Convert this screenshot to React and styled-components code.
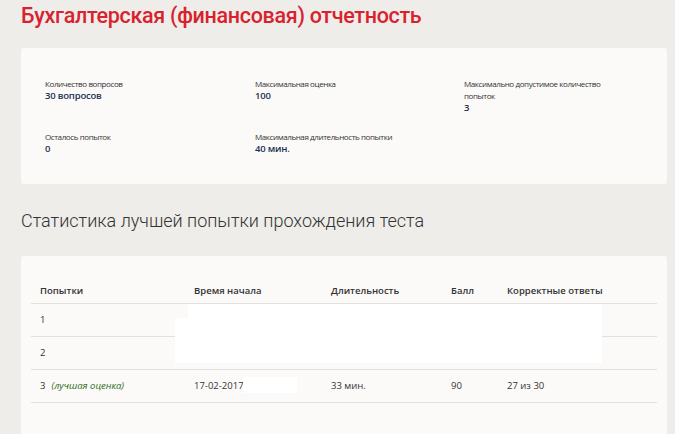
import React from "react";
import styled, { createGlobalStyle } from "styled-components";

const GlobalStyle = createGlobalStyle`
    body {
        margin: 0;
        background: #eeedea;
        font-family: "Open Sans", "Noto Sans", sans-serif;
        color: #333;
    }
`;

const Page = styled.div`
    padding: 0 8px 0 21px;
    height: 434px;
    overflow: hidden;
`;

const Title = styled.h1`
    margin: 0;
    padding: 3px 0 0 0;
    height: 45px;
    font-family: "Roboto", sans-serif;
    font-weight: 500;
    font-size: 21.5px;
    letter-spacing: -0.3px;
    color: #d8232f;
`;

const Card = styled.div`
    background: #fbfaf8;
    border-radius: 3px;
    box-sizing: border-box;
`;

const InfoCard = styled(Card)`
    height: 136px;
    padding: 30px 24px 0 24px;
    display: grid;
    grid-template-columns: 210px 209px 160px;
    row-gap: 17px;
    align-content: start;
`;

const Item = styled.div`
    font-size: 8px;
    line-height: 12px;
    letter-spacing: -0.4px;
`;

const Label = styled.div`
    color: #333;
`;

const Value = styled.div`
    font-size: 9.5px;
    font-weight: 600;
    letter-spacing: -0.2px;
    color: #1b3050;
`;

const Heading = styled.h2`
    margin: 0;
    height: 72px;
    display: flex;
    align-items: center;
    font-family: "Roboto", sans-serif;
    font-weight: 300;
    font-size: 18px;
    color: #333;
`;

const TableCard = styled(Card)`
    position: relative;
    padding: 22px 10px 40px 10px;
    height: 200px;
`;

const Table = styled.table`
    width: 626px;
    table-layout: fixed;
    border-collapse: collapse;
    font-size: 9.5px;
`;

const Th = styled.th`
    box-sizing: border-box;
    text-align: left;
    font-weight: 600;
    height: 25px;
    padding: 0 0 0 9px;
    width: ${(p) => p.$w}px;
    border-bottom: 1px solid #e2e0dd;
`;

const Td = styled.td`
    box-sizing: border-box;
    height: 33px;
    padding: 0 0 0 9px;
    border-bottom: 1px solid #e2e0dd;
`;

const Best = styled.span`
    margin-left: 6px;
    font-style: italic;
    font-size: 9.5px;
    color: #2f6a22;
`;

const Mask = styled.div`
    position: absolute;
    background: #ffffff;
    left: ${(p) => p.$x}px;
    top: ${(p) => p.$y}px;
    width: ${(p) => p.$w}px;
    height: ${(p) => p.$h}px;
`;

const info = [
    { label: "Количество вопросов", value: "30 вопросов" },
    { label: "Максимальная оценка", value: "100" },
    { label: "Максимально допустимое количество попыток", value: "3" },
    { label: "Осталось попыток", value: "0" },
    { label: "Максимальная длительность попытки", value: "40 мин." },
];

const columns = [
    { title: "Попытки", w: 154 },
    { title: "Время начала", w: 137 },
    { title: "Длительность", w: 120 },
    { title: "Балл", w: 56 },
    { title: "Корректные ответы", w: 159 },
];

export default function App() {
    return (
        <Page>
            <GlobalStyle />
            <Title>Бухгалтерская (финансовая) отчетность</Title>

            <InfoCard>
                {info.map((item, i) => (
                    <Item key={i}>
                        <Label>{item.label}</Label>
                        <Value>{item.value}</Value>
                    </Item>
                ))}
            </InfoCard>

            <Heading>Статистика лучшей попытки прохождения теста</Heading>

            <TableCard>
                <Table>
                    <thead>
                        <tr>
                            {columns.map((c) => (
                                <Th key={c.title} $w={c.w}>
                                    {c.title}
                                </Th>
                            ))}
                        </tr>
                    </thead>
                    <tbody>
                        <tr>
                            <Td>1</Td>
                            <Td />
                            <Td />
                            <Td />
                            <Td />
                        </tr>
                        <tr>
                            <Td>2</Td>
                            <Td />
                            <Td />
                            <Td />
                            <Td />
                        </tr>
                        <tr>
                            <Td>
                                3<Best>(лучшая оценка)</Best>
                            </Td>
                            <Td>17-02-2017</Td>
                            <Td>33 мин.</Td>
                            <Td>90</Td>
                            <Td>27 из 30</Td>
                        </tr>
                    </tbody>
                </Table>
                <Mask $x={167} $y={48} $w={414} $h={14} />
                <Mask $x={154} $y={62} $w={427} $h={45} />
                <Mask $x={222} $y={121} $w={54} $h={16} />
            </TableCard>
        </Page>
    );
}
